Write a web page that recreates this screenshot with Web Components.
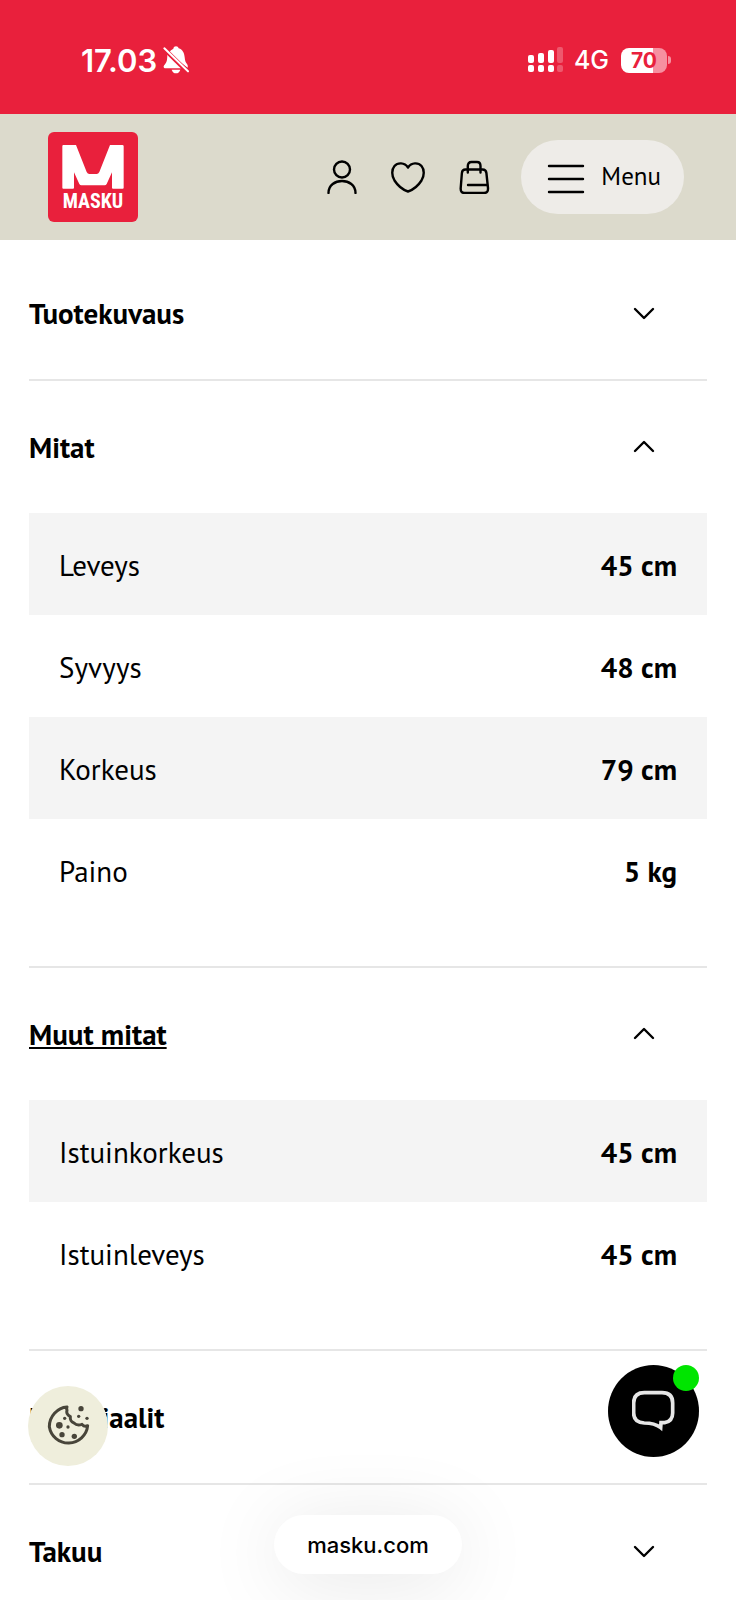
<!DOCTYPE html>
<html lang="fi">
<head>
<meta charset="utf-8">
<meta name="viewport" content="width=device-width, initial-scale=1">
<title>Masku</title>
<style>
    html, body {
        margin: 0;
        height: 100%;
    }
    body {
        background: #fff;
        color: #000;
        font-family: "PT Sans", Lato, "Noto Sans", sans-serif;
    }
</style>
</head>
<body>
<masku-app>
    <status-bar slot="top" time="17.03" network="4G" battery="70"></status-bar>
    <site-header slot="top"></site-header>

    <accordion-item label="Tuotekuvaus"></accordion-item>
    <accordion-item label="Mitat" open>
        <spec-table rows="Leveys:45 cm|Syvyys:48 cm|Korkeus:79 cm|Paino:5 kg"></spec-table>
    </accordion-item>
    <accordion-item label="Muut mitat" open active>
        <spec-table rows="Istuinkorkeus:45 cm|Istuinleveys:45 cm"></spec-table>
    </accordion-item>
    <accordion-item label="Materiaalit"></accordion-item>
    <accordion-item label="Takuu"></accordion-item>

    <cookie-button slot="float"></cookie-button>
    <chat-button slot="float"></chat-button>
    <address-pill slot="float">masku.com</address-pill>
</masku-app>

<script>
class MaskuApp extends HTMLElement {
    constructor() {
        super();
        this.attachShadow({ mode: "open" }).innerHTML = `
            <style>
            :host {
                display: flex;
                flex-direction: column;
                position: relative;
                height: 100vh;
                overflow: hidden;
            }
            main {
                flex: 1;
                min-height: 0;
                overflow-y: auto;
                scrollbar-width: none;
                padding: 7px 29px 0;
            }
            </style>
            <slot name="top"></slot>
            <main><slot></slot></main>
            <slot name="float"></slot>
        `;
    }
}

class StatusBar extends HTMLElement {
    constructor() {
        super();
        const time = this.getAttribute("time");
        const network = this.getAttribute("network");
        const battery = this.getAttribute("battery");

        this.attachShadow({ mode: "open" }).innerHTML = `
            <style>
            :host {
                display: flex;
                align-items: center;
                justify-content: space-between;
                flex: none;
                box-sizing: border-box;
                height: 114px;
                padding: 6px 65px 0 81px;
                background: #e9203c;
                color: #fff;
                font-family: Inter, sans-serif;
            }
            .group {
                display: flex;
                align-items: center;
            }
            .time {
                font-size: 31px;
                font-weight: 600;
                margin-right: 6px;
            }
            .network {
                font-size: 25px;
                font-weight: 500;
                margin: 0 12px 0 10px;
            }
            .battery {
                width: 46px;
                height: 25px;
                border-radius: 8px;
                background: linear-gradient(90deg, #fff ${battery}%, #f690a0 ${battery}%);
                color: #e9203c;
                font-size: 21px;
                font-weight: 700;
                line-height: 25px;
                text-align: center;
            }
            .tip {
                width: 3px;
                height: 8px;
                margin-left: 1px;
                border-radius: 0 4px 4px 0;
                background: #f690a0;
            }
            svg { display: block; }
            </style>
            <div class="group">
                <span class="time">${time}</span>
                <svg width="26" height="28" viewBox="0 0 78 84" fill="#fff">
                    <path d="M17 22C21 14 27 10 31 8c1-5 4-7 8-7s7 2 8 6c12 4 17 14 18 27 1 11 3 16 7 20 2 3 3 6 2 11z"/>
                    <path d="M13 25L57 67H8c-7 0-8-7-3-11 6-6 8-13 8-31z"/>
                    <path d="M26 71h26c-2 7-7 11-13 11s-11-4-13-11z"/>
                    <path d="M4 9L73 77" stroke="#e9203c" stroke-width="13"/>
                    <path d="M4 7L75 76" stroke="#fff" stroke-width="6" stroke-linecap="round"/>
                </svg>
            </div>
            <div class="group">
                <svg width="36" height="26" viewBox="0 0 36 26" fill="#fff">
                    <rect x="0" y="8" width="6" height="8" rx="2"/>
                    <rect x="10" y="6" width="6" height="10" rx="2"/>
                    <rect x="20" y="3" width="6" height="13" rx="2"/>
                    <rect x="0" y="18" width="6" height="7" rx="2"/>
                    <rect x="10" y="18" width="6" height="7" rx="2"/>
                    <rect x="20" y="18" width="6" height="7" rx="2"/>
                    <g opacity=".25">
                        <rect x="29" y="0" width="6" height="16" rx="2"/>
                        <rect x="29" y="18" width="6" height="7" rx="2"/>
                    </g>
                </svg>
                <span class="network">${network}</span>
                <span class="battery">${battery}</span>
                <span class="tip"></span>
            </div>
        `;
    }
}

class MaskuLogo extends HTMLElement {
    constructor() {
        super();
        this.attachShadow({ mode: "open" }).innerHTML = `
            <style>
            :host { display: block; }
            a {
                display: flex;
                flex-direction: column;
                align-items: center;
                box-sizing: border-box;
                width: 90px;
                height: 90px;
                padding-top: 13px;
                border-radius: 6px;
                background: #e9203c;
                color: #fff;
                font: bold 20px/24px "Roboto Condensed", "Liberation Sans Narrow", sans-serif;
                text-decoration: none;
            }
            svg { display: block; }
            </style>
            <a href="#">
                <svg width="62" height="44" viewBox="0 0 186 132" fill="#fff" aria-hidden="true">
                    <path d="M4 0H42L74 81Q77 87 82 87H104Q109 87 112 81L144 0H181Q185 0 185 4V128Q185 131 182 131H153Q150 131 150 128V82L134 117Q132 121 128 121H58Q54 121 52 117L36 82V128Q36 131 33 131H4Q1 131 1 128V4Q1 0 4 0Z"/>
                </svg>
                <span>MASKU</span>
            </a>
        `;
    }
}

class SiteHeader extends HTMLElement {
    constructor() {
        super();
        this.attachShadow({ mode: "open" }).innerHTML = `
            <style>
            :host {
                display: flex;
                align-items: center;
                justify-content: space-between;
                flex: none;
                box-sizing: border-box;
                height: 126px;
                padding: 0 52px 0 48px;
                background: #dcdacc;
            }
            nav, .icons {
                display: flex;
                align-items: center;
            }
            nav { gap: 30px; }
            .icons { gap: 32px; }
            button {
                display: block;
                padding: 0;
                border: 0;
                background: none;
                color: #000;
                font: inherit;
            }
            svg {
                display: block;
                fill: none;
                stroke: #000;
                stroke-linecap: round;
                stroke-linejoin: round;
            }
            .menu {
                display: flex;
                align-items: center;
                gap: 16px;
                box-sizing: border-box;
                height: 74px;
                padding: 0 23px 0 26px;
                border-radius: 37px;
                background: #eeece8;
                font-size: 25px;
                line-height: 30px;
            }
            .menu span { padding-bottom: 2px; }
            .menu svg { margin-top: 4px; }
            </style>
            <masku-logo></masku-logo>
            <nav>
                <div class="icons">
                    <button type="button" aria-label="Oma tili">
                        <svg width="34" height="34" viewBox="0 0 34 34" stroke-width="2.4">
                            <circle cx="17" cy="9.500" r="8"/>
                            <path d="M3.500 33C3.500 17 30.500 17 30.500 33"/>
                        </svg>
                    </button>
                    <button type="button" aria-label="Suosikit">
                        <svg width="34" height="34" viewBox="0 0 34 34" stroke-width="2.4">
                            <path d="M17 7.500C13.500 2 6.500 2.500 3.500 6C.500 9.500 .500 15.500 3.500 20.500C7 26 12.500 30 17 31.500C21.500 30 27 26 30.500 20.500C33.500 15.500 33.500 9.500 30.500 6C27.500 2.500 20.500 2 17 7.500Z"/>
                        </svg>
                    </button>
                    <button type="button" aria-label="Ostoskori">
                        <svg width="34" height="34" viewBox="0 0 34 34" stroke-width="2.4">
                            <path d="M8.500 9.500H25.500Q29 9.500 29.400 13L31 28Q31.300 33 27 33H7.500Q3.400 33 3.700 28L4.900 13Q5.200 9.500 8.500 9.500Z"/>
                            <path d="M10.800 12.500V6Q10.800 2 14.500 2H20Q23.500 2 23.500 6V12.500M11 25H30"/>
                        </svg>
                    </button>
                </div>
                <button type="button" class="menu">
                    <svg width="38" height="30" viewBox="0 0 38 30" stroke-width="2.4">
                        <path d="M2 2H36M2 15H36M2 28H36"/>
                    </svg>
                    <span>Menu</span>
                </button>
            </nav>
        `;
    }
}

class AccordionItem extends HTMLElement {
    constructor() {
        super();
        this.attachShadow({ mode: "open" }).innerHTML = `
            <style>
            :host {
                display: block;
                border-bottom: 2px solid #e6e6e6;
            }
            h2 { margin: 0; }
            button {
                display: flex;
                align-items: center;
                justify-content: space-between;
                box-sizing: border-box;
                width: 100%;
                height: 132px;
                padding: 0 51px 0 0;
                border: 0;
                background: none;
                color: #000;
                font: inherit;
                font-size: 29px;
                font-weight: 700;
                line-height: 36px;
            }
            :host([active]) span {
                text-decoration: underline;
                text-decoration-thickness: 2px;
                text-underline-offset: 2px;
                text-decoration-skip-ink: none;
            }
            svg {
                fill: none;
                stroke: #000;
                stroke-linecap: round;
                stroke-linejoin: round;
            }
            :host([open]) svg { transform: scaleY(-1); }
            .panel {
                display: none;
                padding-bottom: 45px;
            }
            :host([open]) .panel { display: block; }
            </style>
            <h2>
                <button type="button" aria-controls="panel">
                    <span>${this.getAttribute("label")}</span>
                    <svg width="24" height="14" viewBox="0 0 24 14" stroke-width="2.4"><path d="M3 3L12 12L21 3"/></svg>
                </button>
            </h2>
            <div class="panel" id="panel"><slot></slot></div>
        `;
        this.button = this.shadowRoot.querySelector("button");
        this.button.addEventListener("click", () => this.toggleAttribute("open"));
    }

    static get observedAttributes() {
        return ["open"];
    }

    connectedCallback() {
        this.button.setAttribute("aria-expanded", this.hasAttribute("open"));
    }

    attributeChangedCallback() {
        this.button.setAttribute("aria-expanded", this.hasAttribute("open"));
    }
}

class SpecTable extends HTMLElement {
    constructor() {
        super();
        const rows = this.getAttribute("rows").split("|").map((row) => {
            const [name, value] = row.split(":");
            return `<tr><th scope="row">${name}</th><td>${value}</td></tr>`;
        });

        this.attachShadow({ mode: "open" }).innerHTML = `
            <style>
            :host { display: block; }
            table {
                width: 100%;
                border-collapse: collapse;
                font-size: 29px;
                line-height: 36px;
            }
            tr:nth-child(odd) { background: #f4f4f4; }
            th, td {
                padding: 34px 30px 32px;
            }
            th {
                font-weight: 400;
                text-align: left;
            }
            td {
                font-weight: 700;
                text-align: right;
            }
            </style>
            <table><tbody>${rows.join("")}</tbody></table>
        `;
    }
}

class CookieButton extends HTMLElement {
    constructor() {
        super();
        this.attachShadow({ mode: "open" }).innerHTML = `
            <style>
            :host {
                display: block;
                position: absolute;
                left: 28px;
                bottom: 134px;
            }
            button {
                display: flex;
                align-items: center;
                justify-content: center;
                width: 80px;
                height: 80px;
                padding: 0;
                border: 0;
                border-radius: 50%;
                background: #efeedc;
            }
            </style>
            <button type="button" aria-label="Evästeasetukset">
                <svg width="43" height="43" viewBox="0 0 129 129">
                    <path d="M60 6C31 8 7 34 7 65A58 58 0 0 0 122 62C116 65 109 63 105 58C97 61 87 60 81 54C73 52 69 43 70 35C64 32 57 25 60 16Q58 11 60 6Z" fill="none" stroke="#48453a" stroke-width="9" stroke-linejoin="round"/>
                    <g fill="#48453a">
                        <circle cx="102" cy="11" r="8"/>
                        <circle cx="95" cy="34" r="5"/>
                        <circle cx="120" cy="40" r="5"/>
                        <circle cx="53" cy="40" r="5"/>
                        <circle cx="37" cy="61" r="10"/>
                        <circle cx="63" cy="66" r="5"/>
                        <circle cx="45" cy="89" r="8"/>
                        <circle cx="82" cy="94" r="8"/>
                    </g>
                </svg>
            </button>
        `;
    }
}

class ChatButton extends HTMLElement {
    constructor() {
        super();
        this.attachShadow({ mode: "open" }).innerHTML = `
            <style>
            :host {
                display: block;
                position: absolute;
                right: 37px;
                bottom: 143px;
            }
            button {
                display: flex;
                align-items: center;
                justify-content: center;
                width: 91px;
                height: 92px;
                padding: 0;
                border: 0;
                border-radius: 50%;
                background: #000;
            }
            .online {
                position: absolute;
                top: 0;
                right: 0;
                width: 26px;
                height: 26px;
                border-radius: 50%;
                background: #00e500;
            }
            </style>
            <button type="button" aria-label="Avaa chat">
                <svg width="44" height="44" viewBox="0 0 132 132">
                    <path d="M37 11H90Q122 11 122 42V72Q122 97 98 101H87L86 116Q68 102 37 102Q5 101 5 72V42Q5 11 37 11Z" fill="none" stroke="#e6e6e6" stroke-width="11"/>
                </svg>
            </button>
            <span class="online"></span>
        `;
    }
}

class AddressPill extends HTMLElement {
    constructor() {
        super();
        this.attachShadow({ mode: "open" }).innerHTML = `
            <style>
            :host {
                display: flex;
                justify-content: center;
                position: absolute;
                left: 0;
                right: 0;
                bottom: 26px;
                pointer-events: none;
            }
            button {
                height: 59px;
                padding: 0 33px;
                border: 0;
                border-radius: 30px;
                background: #fff;
                box-shadow: 0 8px 80px rgba(0, 0, 0, 0.1);
                color: #000;
                font: 500 22px/28px Inter, sans-serif;
                pointer-events: auto;
            }
            </style>
            <button type="button"><slot></slot></button>
        `;
    }
}

customElements.define("masku-app", MaskuApp);
customElements.define("status-bar", StatusBar);
customElements.define("masku-logo", MaskuLogo);
customElements.define("site-header", SiteHeader);
customElements.define("accordion-item", AccordionItem);
customElements.define("spec-table", SpecTable);
customElements.define("cookie-button", CookieButton);
customElements.define("chat-button", ChatButton);
customElements.define("address-pill", AddressPill);
</script>
</body>
</html>
